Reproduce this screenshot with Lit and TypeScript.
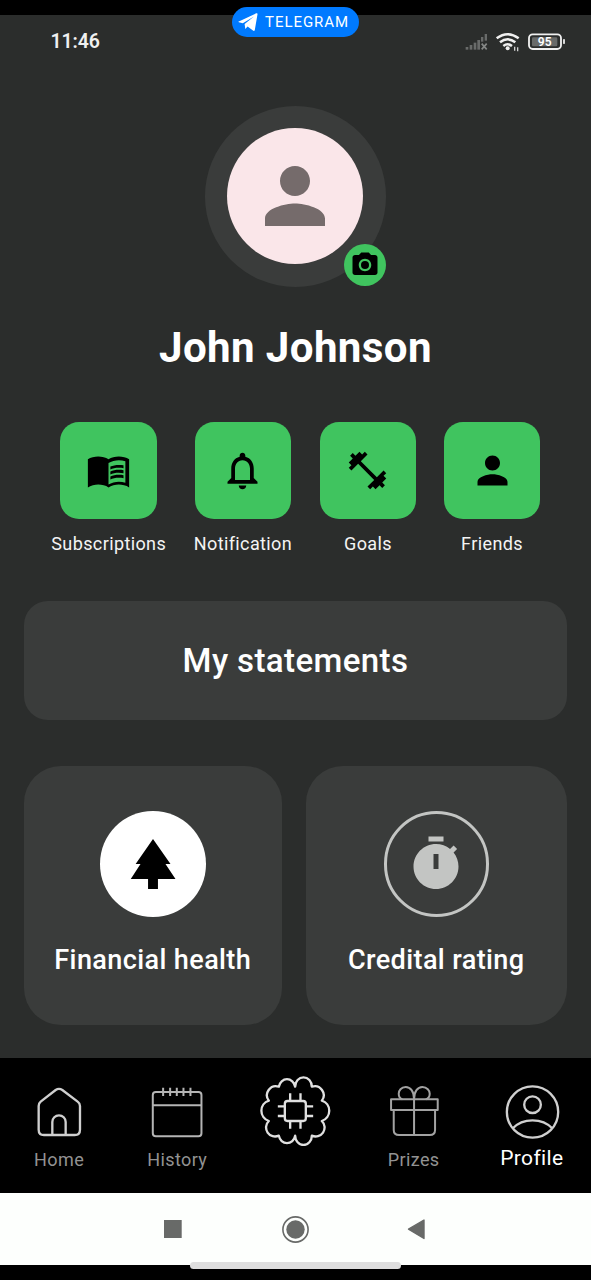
import { LitElement, html, css, svg } from "lit";
import { customElement } from "lit/decorators.js";

const PERSON = "M12 12c2.21 0 4-1.79 4-4s-1.79-4-4-4-4 1.79-4 4 1.79 4 4 4zm0 2c-2.67 0-8 1.34-8 4v2h16v-2c0-2.66-5.33-4-8-4z";
const CAMERA = "M9 2 7.17 4H4c-1.1 0-2 .9-2 2v12c0 1.1.9 2 2 2h16c1.1 0 2-.9 2-2V6c0-1.1-.9-2-2-2h-3.17L15 2H9zm3 15c-2.76 0-5-2.24-5-5s2.24-5 5-5 5 2.24 5 5-2.24 5-5 5z";
const BOOK = "M17.5 4.5c-1.95 0-4.05.4-5.5 1.5-1.45-1.1-3.55-1.5-5.5-1.5S2.45 4.9 1 6v15c1.45-.9 3.8-1.5 5.5-1.5 1.95 0 4.05.4 5.5 1.5 1.35-.85 3.8-1.5 5.5-1.5 1.65 0 4.05.55 5.5 1.5V6c-1.45-1.1-3.55-1.5-5.5-1.5zM21 18.5c-1.1-.35-2.3-.5-3.5-.5-1.7 0-4.15.65-5.5 1.5V8c1.35-.85 3.8-1.5 5.5-1.5 1.2 0 2.4.15 3.5.5v11.5z";
const BOOK_LINES = "M17.5 10.5c.88 0 1.73.09 2.5.26V9.24c-.79-.15-1.64-.24-2.5-.24-1.7 0-3.24.29-4.5.83v1.66c1.13-.64 2.7-.99 4.5-.99zM13 12.49v1.66c1.13-.64 2.7-.99 4.5-.99.88 0 1.73.09 2.5.26V11.9c-.79-.15-1.64-.24-2.5-.24-1.7 0-3.24.3-4.5.83zM17.5 14.33c-1.7 0-3.24.29-4.5.83v1.66c1.13-.64 2.7-.99 4.5-.99.88 0 1.73.09 2.5.26v-1.52c-.79-.16-1.64-.24-2.5-.24z";
const BELL = "M12 22c1.1 0 2-.9 2-2h-4c0 1.1.9 2 2 2zm6-6v-5c0-3.07-1.63-5.64-4.5-6.32V4c0-.83-.67-1.5-1.5-1.5s-1.5.67-1.5 1.5v.68C7.64 5.36 6 7.92 6 11v5l-2 2v1h16v-1l-2-2zm-2 1H8v-6c0-2.48 1.51-4.5 4-4.5s4 2.02 4 4.5v6z";
const DUMBBELL = "M20.57 14.86L22 13.43 20.57 12 17 15.57 8.43 7 12 3.43 10.57 2 9.14 3.43 7.71 2 5.57 4.14 4.14 2.71 2.71 4.14l1.43 1.43L2 7.71l1.43 1.43L2 10.57 3.43 12 7 8.43 15.57 17 12 20.57 13.43 22l1.43-1.43L16.29 22l2.14-2.14 1.43 1.43 1.43-1.43-1.43-1.43L22 16.29z";
const TREE = "M17 12h2L12 2 5.05 12H7l-3.9 6h6.92v4h3.96v-4H21z";
const TIMER = "M15 1H9v2h6V1zm-4 13h2V8h-2v6zm8.03-6.61 1.42-1.42c-.43-.51-.9-.99-1.41-1.41l-1.42 1.42C16.07 4.74 14.12 4 12 4c-4.97 0-9 4.03-9 9s4.02 9 9 9 9-4.03 9-9c0-2.12-.74-4.07-1.97-5.61z";

const icon = (size: number, d: string, extra = "") => html`
  <svg width=${size} height=${size} viewBox="0 0 24 24" fill="currentColor">
    <path fill-rule="evenodd" d=${d}></path>
    ${extra ? svg`<path d=${extra}></path>` : ""}
  </svg>`;

const actions = [
  { label: "Subscriptions", d: BOOK, extra: BOOK_LINES },
  { label: "Notification", d: BELL },
  { label: "Goals", d: DUMBBELL },
  { label: "Friends", d: PERSON },
];

const tabs = [
  {
    label: "Home", x: -60, tone: "#cfcfcf", width: 7,
    art: svg`<path d="M72 256Q56 256 56 240V169Q56 161 62 156L107 121Q117 114 127 121L173 156Q180 161 180 169V240Q180 256 164 256Z"/><path d="M97 256V217A20 20 0 0 1 137 217V256"/>`,
  },
  {
    label: "History", x: 294.6, tone: "#b4b4b4", width: 6,
    art: svg`<rect x="399" y="127" width="146" height="133" rx="9"/><path d="M399 167H545"/><path d="M430 114V139M451 114V139M471 114V139M491 114V139M512 114V139"/>`,
  },
  {
    label: "", x: -11.5, tone: "#e0e0e0", width: 7,
    art: svg`<path d="M166 111A25 28 0 0 0 117 111A27 27 0 0 0 87 153A32 32 0 0 0 87 214A27 27 0 0 0 117 258A25 28 0 0 0 166 258A25 28 0 0 0 216 258A27 27 0 0 0 246 214A32 32 0 0 0 246 153A27 27 0 0 0 216 111A25 28 0 0 0 166 111Z"/><rect x="135" y="154" width="63" height="60" rx="8"/><path d="M151 131V154M182 131V154M151 214V237M182 214V237M114 170H135M114 199H135M198 170H220M198 199H220"/>`,
  },
  {
    label: "Prizes", x: 343.8, tone: "#a2a2a2", width: 6,
    art: svg`<rect x="452" y="149" width="140" height="32"/><path d="M460 181V241Q460 256 476 256H568Q584 256 584 241V181M521 149V256"/><path d="M521 148C521 125 510 112 496 112C482 112 475 123 475 132C475 141 480 147 486 149M521 148C521 125 532 112 546 112C560 112 568 123 568 132C568 141 562 147 556 149"/>`,
  },
  {
    label: "Profile", x: 98.4, tone: "#cfcfcf", width: 7, active: true,
    art: svg`<circle cx="277" cy="187" r="77"/><circle cx="277" cy="165" r="25"/><path d="M218 236Q240 212 277 212Q314 212 336 236"/>`,
  },
];

@customElement("app-root")
export class AppRoot extends LitElement {
  static styles = css`
    :host {
      display: flex;
      flex-direction: column;
      position: relative;
      box-sizing: border-box;
      width: 591px;
      height: 1280px;
      padding-top: 15px;
      overflow: hidden;
      background: #000;
      color: #fff;
      font-family: Roboto, sans-serif;
      letter-spacing: 0.376px;
    }
    svg { display: block; flex: none; }
    .pill {
      position: absolute;
      top: 7px;
      left: 231.5px;
      width: 127.5px;
      height: 30px;
      border-radius: 16px;
      background: #007aff;
      display: flex;
      align-items: center;
      box-sizing: border-box;
      padding-left: 6px;
      gap: 7.5px;
      font-size: 15px;
      font-weight: 400;
      letter-spacing: 0.95px;
    }
    .screen {
      height: 1043px;
      flex: none;
      background: #2b2d2c;
      display: flex;
      flex-direction: column;
      align-items: center;
    }
    .status {
      width: 100%;
      height: 53px;
      box-sizing: border-box;
      padding: 0 21px 0 50.5px;
      display: flex;
      align-items: center;
      justify-content: space-between;
      font-size: 19.5px;
      font-weight: 600;
      letter-spacing: -0.1px;
      color: #f0f0f0;
    }
    .battery { font: 600 36px Roboto, sans-serif; letter-spacing: 0; }
    .halo {
      position: relative;
      margin-top: 38px;
      width: 181px;
      height: 181px;
      border-radius: 50%;
      background: #3a3c3b;
      display: grid;
      place-items: center;
    }
    .avatar {
      width: 136px;
      height: 136px;
      margin: 0 1px 1px 0;
      border-radius: 50%;
      background: #fae6e9;
      color: #756b6b;
      display: grid;
      place-items: center;
    }
    .camera {
      position: absolute;
      right: 0.5px;
      bottom: 1px;
      width: 42px;
      height: 42px;
      border-radius: 50%;
      background: #40c45f;
      color: #000;
      display: grid;
      place-items: center;
    }
    .lens { position: absolute; width: 8px; height: 8px; border-radius: 50%; background: #000; }
    .name {
      margin: 36px 0 0;
      font-size: 42.1px;
      line-height: 50px;
      font-weight: 700;
    }
    .actions {
      display: flex;
      gap: 27.6px;
      margin-top: 49px;
      padding-left: 0.6px;
    }
    .action { display: flex; flex-direction: column; align-items: center; }
    .tile {
      width: 96.5px;
      height: 96.5px;
      border-radius: 19px;
      background: #40c45f;
      color: #000;
      display: grid;
      place-items: center;
    }
    .label { margin-top: 14.5px; font-size: 18.05px; line-height: 22px; color: #f4f4f4; }
    .panel { background: #3a3c3b; font-weight: 500; }
    .statements {
      margin-top: 46px;
      width: 543px;
      height: 119px;
      border-radius: 24px;
      display: grid;
      place-items: center;
      font-size: 33.1px;
    }
    .cards {
      width: 543px;
      margin-top: 46px;
      display: grid;
      grid-template-columns: 257.5px 261.5px;
      gap: 24px;
    }
    .card {
      height: 259px;
      border-radius: 37px;
      box-sizing: border-box;
      padding-top: 45px;
      display: flex;
      flex-direction: column;
      align-items: center;
      font-size: 27.07px;
      line-height: 32px;
    }
    .disc {
      width: 105.5px;
      height: 105.5px;
      box-sizing: border-box;
      border-radius: 50%;
      display: grid;
      place-items: center;
      margin-bottom: 27.5px;
    }
    .solid { background: #fff; color: #000; }
    .ring { border: 3px solid #c3c5c3; color: #c3c5c3; }
    .tabs {
      height: 135px;
      flex: none;
      background: #000;
      display: grid;
      grid-template-columns: repeat(5, 118.2px);
    }
    .tab {
      display: flex;
      flex-direction: column;
      align-items: center;
      font-size: 18.05px;
      line-height: 28px;
      color: #929292;
    }
    .active { font-size: 21px; line-height: 24px; color: #fff; }
    .system { height: 72px; flex: none; background: #fdfffd; }
    .handle {
      position: absolute;
      left: 190px;
      top: 1262px;
      width: 211px;
      height: 7px;
      border-radius: 4px;
      background: #dedede;
    }
  `;

  render() {
    return html`
      <div class="screen">
        <div class="status">
          <span>11:46</span>
          <svg width="110" height="24" viewBox="60 28 330 72">
            <g fill="#696b6a">
              <rect x="77" y="79" width="8" height="8"/><rect x="89" y="73" width="8" height="14"/>
              <rect x="101" y="66" width="8" height="21"/><rect x="112" y="58" width="8" height="29"/>
              <rect x="123" y="49" width="7" height="14"/><rect x="134" y="40" width="7" height="20"/>
            </g>
            <path d="M125 69L140 86M140 69L125 86" stroke="#858786" stroke-width="5"/>
            <g fill="none" stroke="#f0f0f0" stroke-width="7.5">
              <path d="M170 53Q203 28 236 53"/><path d="M180 65Q203 47 226 65"/><path d="M190 76Q203 66 216 76"/>
            </g>
            <circle cx="203" cy="83" r="6" fill="#f0f0f0"/>
            <path d="M224 78V90M233 80V92" stroke="#d0d0d0" stroke-width="4"/>
            <rect x="267" y="41" width="96" height="44" rx="11" fill="none" stroke="#f0f0f0" stroke-width="5.5"/>
            <rect x="276" y="50" width="76" height="27" rx="4" fill="#686a69"/>
            <rect x="369" y="55" width="6" height="15" rx="2" fill="#d8d8d8"/>
            <text class="battery" x="314" y="76.5" text-anchor="middle" fill="#fff">95</text>
          </svg>
        </div>
        <div class="halo">
          <div class="avatar">${icon(90, PERSON)}</div>
          <div class="camera">${icon(30, CAMERA)}<span class="lens"></span></div>
        </div>
        <h1 class="name">John Johnson</h1>
        <div class="actions">
          ${actions.map((a) => html`
            <div class="action">
              <div class="tile">${icon(45, a.d, a.extra)}</div>
              <span class="label">${a.label}</span>
            </div>`)}
        </div>
        <div class="panel statements">My statements</div>
        <div class="cards">
          <div class="panel card"><div class="disc solid">${icon(60, TREE)}</div>Financial health</div>
          <div class="panel card"><div class="disc ring">${icon(60, TIMER)}</div>Credital rating</div>
        </div>
      </div>
      <nav class="tabs">
        ${tabs.map((t) => html`
          <div class="tab ${t.active ? "active" : ""}">
            <svg width="118.2" height="88" viewBox="${t.x} 25 354.6 264" fill="none" stroke=${t.tone} stroke-width=${t.width} stroke-linejoin="round">${t.art}</svg>
            <span>${t.label}</span>
          </div>`)}
      </nav>
      <div class="system">
        <svg width="591" height="72" viewBox="0 1193 591 72" fill="#686a68">
          <rect x="164" y="1220" width="17.7" height="18"/>
          <circle cx="295.5" cy="1229.5" r="12.6" fill="none" stroke="#686a68" stroke-width="1.6"/>
          <circle cx="295.5" cy="1229.5" r="9.2"/>
          <path d="M408.5 1229.2L424 1220V1238.5Z" stroke="#686a68" stroke-width="1.4" stroke-linejoin="round"/>
        </svg>
      </div>
      <div class="handle"></div>
      <div class="pill">
        <svg width="20" height="20" viewBox="0 0 20 20" fill="#fff">
          <path d="M.8 9.4 18.3 1.3c.9-.4 1.4 0 1.2 1L16.8 18c-.2 1-1 1.2-1.8.6L9.6 14.6 7.3 17 6.6 11.9 16 4.6 4.8 11.2.9 10.3c-.8-.2-.8-.6-.1-.9z"/>
        </svg>
        <span>TELEGRAM</span>
      </div>
    `;
  }
}
